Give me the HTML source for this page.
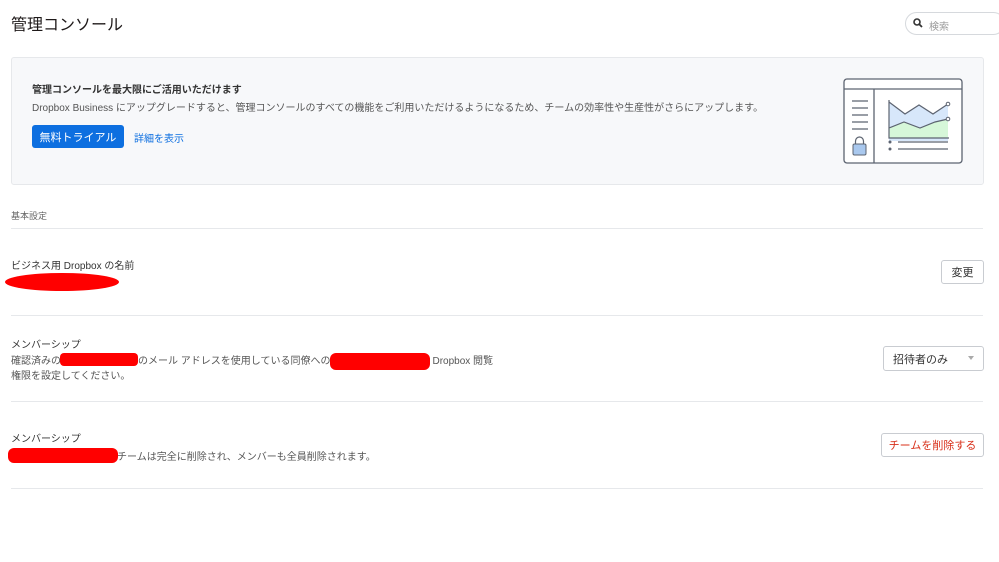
<!DOCTYPE html>
<html><head><meta charset="utf-8"><style>
*{margin:0;padding:0;box-sizing:border-box}
body{width:999px;height:562px;background:#fff;font-family:"Liberation Sans","Noto Sans CJK JP",sans-serif;color:#1e1919;position:relative;overflow:hidden}
.a{position:absolute;white-space:nowrap}
.line{position:absolute;left:11px;width:972px;height:1px;background:#e6e8eb}
.red{position:absolute;background:#f00;border-radius:50%}
.btn{position:absolute;border:1px solid #c9ccd1;border-radius:3px;background:#fff;font-size:11px;display:flex;align-items:center;justify-content:center}
</style></head><body>
<div class="a" style="left:11px;top:11px;font-size:16px;color:#1e1919">管理コンソール</div>
<div class="a" style="left:905px;top:12px;width:100px;height:23px;border:1px solid #d6d9dd;border-radius:12px;font-size:10px;color:#9a9a9a;padding:5px 0 0 23px">検索</div>
<svg class="a" style="left:913px;top:18px" width="10" height="10" viewBox="0 0 10 10"><circle cx="4" cy="4" r="3" fill="none" stroke="#333" stroke-width="1.6"/><path d="M6 6l3 3" stroke="#333" stroke-width="1.8"/></svg>

<div class="a" style="left:11px;top:57px;width:973px;height:128px;background:#f7f8fa;border:1px solid #e6e8eb;border-radius:3px"></div>
<div class="a" style="left:32px;top:81px;font-size:10px;font-weight:bold;color:#333">管理コンソールを最大限にご活用いただけます</div>
<div class="a" style="left:32px;top:99px;font-size:10px;color:#555">Dropbox Business にアップグレードすると、管理コンソールのすべての機能をご利用いただけるようになるため、チームの効率性や生産性がさらにアップします。</div>
<div class="a" style="left:32px;top:125px;width:92px;height:23px;background:#0d6fe0;border-radius:3px;color:#fff;font-size:11px;display:flex;align-items:center;justify-content:center">無料トライアル</div>
<div class="a" style="left:134px;top:130px;font-size:10px;color:#0d6fe0">詳細を表示</div>
<svg class="a" style="left:843px;top:78px" width="121" height="87" viewBox="0 0 121 87">
<rect x="1" y="1" width="118" height="84" rx="3" fill="#fff" stroke="#5c6370" stroke-width="1.3"/>
<path d="M1 11h118M31 11v74" stroke="#5c6370" stroke-width="1.3"/>
<path d="M9 23h16M9 30h16M9 37h16M9 44h16M9 51h16" stroke="#5c6370" stroke-width="1.2"/>
<rect x="10" y="66" width="13" height="11" rx="1.5" fill="#a9c8ee" stroke="#5c6370"/>
<path d="M12.5 66v-3a4 4 0 0 1 8 0v3" fill="none" stroke="#5c6370" stroke-width="1.2"/>
<path d="M46 24l16 12l14-9l14 9l15-10v37H46z" fill="#d7e7fa"/>
<path d="M46 50l15-6l16 6l15-6l13-3v19H46z" fill="#d6f7d9"/>
<path d="M46 22v38h60M46 24l16 12l14-9l14 9l15-10M46 50l15-6l16 6l15-6l13-3" fill="none" stroke="#5c6370" stroke-width="1.2"/>
<circle cx="105" cy="26" r="1.8" fill="#fff" stroke="#5c6370"/><circle cx="105" cy="41" r="1.8" fill="#fff" stroke="#5c6370"/>
<circle cx="47" cy="64" r="1.5" fill="#5c6370"/><circle cx="47" cy="71" r="1.5" fill="#5c6370"/>
<path d="M55 64h50M55 71h50" stroke="#5c6370" stroke-width="1.2"/>
</svg>

<div class="a" style="left:11px;top:209px;font-size:9px;color:#666">基本設定</div>
<div class="line" style="top:228px"></div>
<div class="a" style="left:11px;top:257px;font-size:10px;color:#333">ビジネス用 Dropbox の名前</div>
<div class="red" style="left:5px;top:273px;width:114px;height:18px"></div>
<div class="btn" style="left:941px;top:260px;width:43px;height:24px;color:#333">変更</div>
<div class="line" style="top:315px"></div>

<div class="a" style="left:11px;top:336px;font-size:10px;color:#333">メンバーシップ</div>
<div class="a" style="left:11px;top:354px;font-size:10px;color:#555;line-height:15px">確認済みの<span style="display:inline-block;width:77px"></span>のメール アドレスを使用している同僚への<span style="display:inline-block;width:102px"></span>Dropbox 閲覧<br>権限を設定してください。</div>
<div class="red" style="left:60px;top:353px;width:78px;height:13px;border-radius:4px"></div>
<div class="red" style="left:330px;top:353px;width:100px;height:17px;border-radius:6px"></div>
<div class="btn" style="left:883px;top:346px;width:101px;height:25px;color:#333;justify-content:flex-start;padding-left:9px">招待者のみ<span style="position:absolute;right:9px;top:9px;border:3px solid transparent;border-top:4px solid #aaa"></span></div>
<div class="line" style="top:401px"></div>

<div class="a" style="left:11px;top:430px;font-size:10px;color:#333">メンバーシップ</div>
<div class="a" style="left:117px;top:448px;font-size:10px;color:#555">チームは完全に削除され、メンバーも全員削除されます。</div>
<div class="red" style="left:8px;top:448px;width:110px;height:15px;border-radius:6px"></div>
<div class="btn" style="left:881px;top:433px;width:103px;height:24px;color:#d8301a">チームを削除する</div>
<div class="line" style="top:488px"></div>
</body></html>
